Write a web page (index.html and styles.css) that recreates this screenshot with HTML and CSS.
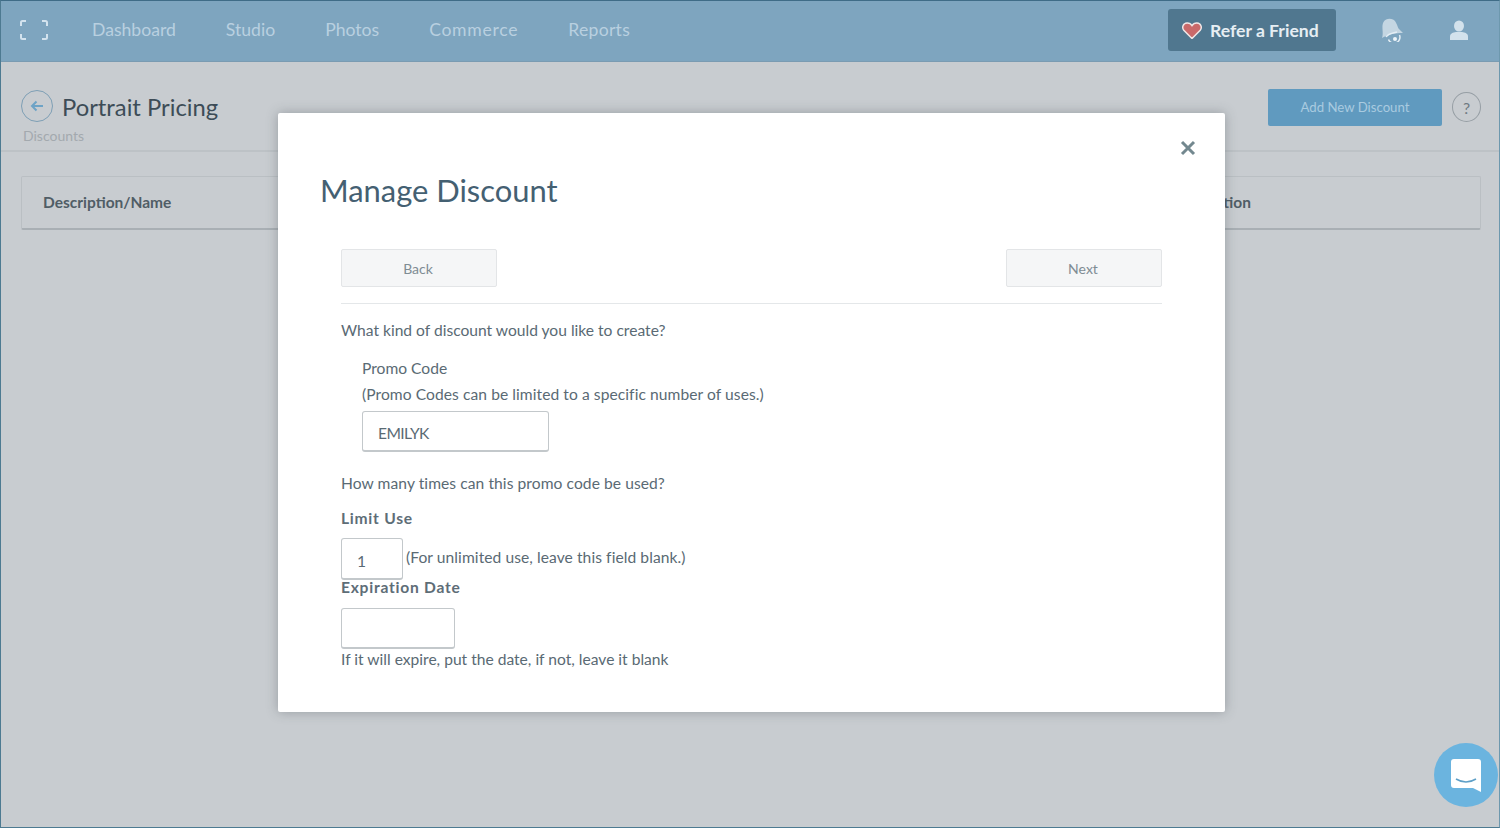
FILE: index.html
```html
<!DOCTYPE html>
<html lang="en">
<head>
<meta charset="utf-8">
<title>Manage Discount</title>
<link rel="stylesheet" href="styles.css">
</head>
<body>
<div class="page">
  <header class="nav">
    <svg class="logo" width="28" height="20" viewBox="0 0 28 20" fill="none" stroke="#d3e3ee" stroke-width="2"><path d="M6 1H2.500Q1 1 1 2.500V6M1 14V17.500Q1 19 2.500 19H6M22 1H25.500Q27 1 27 2.500V6M27 14V17.500Q27 19 25.500 19H22"/></svg>
    <nav class="links">
      <a>Dashboard</a><a>Studio</a><a>Photos</a><a class="wide">Commerce</a><a class="wide-sm">Reports</a>
    </nav>
    <div class="refer">
      <svg width="20" height="17" viewBox="0 0 20 17"><path d="M10 16.500 1.800 8.300C-.4 5.600 1 1.200 5 1c2.200-.1 4 1 5 2.600C11 2 12.800.9 15 1c4 .2 5.400 4.600 3.200 7.300Z" fill="#c9696a" stroke="#f0e6e6" stroke-width="1.500"/></svg>
      <span>Refer a Friend</span>
    </div>
    <svg class="bell" width="24" height="24" viewBox="0 0 24 24"><path d="M2 20C4 15 1 8 3.500 4 5.500.5 10 0 13 1.500c3.500 2 4 6 5.500 9L23 15c-7 0-15 1-21 5Z" fill="#c4d6e2"/><path d="M6 19c2-3.500 7-4 11-5M8.500 21.500a5 5 0 0 0 11-4.500" fill="none" stroke="#e4eef5" stroke-width="1.500"/><circle cx="15" cy="21" r="2" fill="#eef5f9"/></svg>
    <svg class="user" width="18" height="21" viewBox="0 0 18 21" fill="#d3e2ec"><ellipse cx="9" cy="6" rx="5" ry="5.500"/><path d="M0 20v-3.500c0-3 3-4 6-4.500h6c3 .5 6 1.500 6 4.500V20Z"/></svg>
  </header>
  <main class="content">
    <div class="head">
      <div class="title-block">
        <div class="title-row">
          <span class="back-circle">
            <svg width="14" height="12" viewBox="0 0 14 12" fill="none" stroke="#6da3c6" stroke-width="2"><path d="M13 6H2M6.500 1.500 2 6l4.500 4.500"/></svg>
          </span>
          <h1>Portrait Pricing</h1>
        </div>
        <div class="crumb">Discounts</div>
      </div>
      <div class="add">Add New Discount</div>
      <div class="help">?</div>
    </div>
    <div class="table-head">
      <span class="th">Description/Name</span>
      <span class="th">Expiration</span>
    </div>
  </main>

  <section class="modal">
    <div class="close">
      <svg width="16" height="16" viewBox="0 0 16 16" fill="none" stroke="#73888f" stroke-width="3"><path d="M2 2 14 14M14 2 2 14"/></svg>
    </div>
    <h2>Manage Discount</h2>
    <div class="body">
      <div class="steps">
        <div class="step">Back</div>
        <div class="step">Next</div>
      </div>
      <p class="q1">What kind of discount would you like to create?</p>
      <div class="promo">
        <div class="promo-name">Promo Code</div>
        <div class="promo-note">(Promo Codes can be limited to a specific number of uses.)</div>
        <div class="field code">EMILYK</div>
      </div>
      <p class="q2">How many times can this promo code be used?</p>
      <div class="label limit-label">Limit Use</div>
      <div class="limit-row">
        <div class="field limit">1</div>
        <span class="limit-note">(For unlimited use, leave this field blank.)</span>
      </div>
      <div class="label">Expiration Date</div>
      <div class="field date"></div>
      <p class="hint">If it will expire, put the date, if not, leave it blank</p>
    </div>
  </section>

  <div class="chat">
    <svg width="32" height="33" viewBox="0 0 32 33"><path d="M4 0H28Q31 0 31 3V33L23 29H4Q1 29 1 26V3Q1 0 4 0Z" fill="#fff"/><path d="M6 20Q16 26 26 20" fill="none" stroke="#5d9fc7" stroke-width="1.500"/></svg>
  </div>
</div>
</body>
</html>
```
FILE: styles.css
```css
* { box-sizing: border-box; }
html, body { margin: 0; padding: 0; }
body {
  font-family: Lato, "Open Sans", sans-serif;
  color: #4c5f6a;
  background: #c8ccd0;
}
.page {
  position: relative;
  width: 1500px;
  height: 828px;
  overflow: hidden;
  background: #c8ccd0;
  border-top: 1px solid #3f6c87;
  border-left: 1px solid #4d7a91;
  border-bottom: 1px solid #4d7a91;
  border-right: 1px solid #6d98ae;
}
.nav {
  display: flex;
  align-items: center;
  height: 61px;
  background: #7ea5bf;
  border-bottom: 1px solid #7a9bb2;
  padding: 0 0 2px 19px;
}
.logo { margin-right: 44px; flex: none; }
.links { display: flex; gap: 50px; flex: 1; padding-bottom: 2px; }
.links a { font-size: 17.600px; color: #b9d0e0; }
.links .wide { letter-spacing: .7px; }
.links .wide-sm { letter-spacing: .3px; }
.refer {
  display: flex;
  align-items: center;
  gap: 8px;
  width: 168px;
  height: 42px;
  padding-left: 14px;
  margin-right: 44px;
  background: #50778f;
  border-radius: 3px;
  color: #e6eef3;
  font-size: 17.600px;
  font-weight: 700;
}
.bell { margin-right: 46px; }
.user { margin-right: 31px; }
.content { padding: 0 18px 0 20px; }
.head {
  display: flex;
  align-items: flex-start;
  height: 90px;
  margin: 0 -18px 0 -20px;
  padding: 0 18px 0 20px;
  border-bottom: 2px solid #bdc2c6;
}
.title-block { flex: 1; padding-top: 28px; }
.title-row { display: flex; align-items: center; gap: 9px; }
.back-circle {
  display: flex;
  align-items: center;
  justify-content: center;
  width: 32px;
  height: 32px;
  border: 1.500px solid #7e9fb5;
  border-radius: 50%;
}
h1 { margin: 0; padding-top: 2px; font-size: 23.800px; font-weight: 400; line-height: 30px; color: #3d4c57; }
.crumb { margin: 6px 0 0 2px; font-size: 14px; line-height: 16px; color: #a3a9ae; }
.add {
  display: flex;
  align-items: center;
  justify-content: center;
  width: 174px;
  height: 37px;
  margin-top: 27px;
  padding-bottom: 2px;
  background: #609abf;
  border-radius: 2px;
  font-size: 13.200px;
  color: #a9cbe0;
}
.help {
  display: flex;
  align-items: center;
  justify-content: center;
  width: 29px;
  height: 30px;
  margin: 30px 0 0 10px;
  border: 1px solid #969ea4;
  border-radius: 50%;
  font-size: 16px;
  color: #6f7a82;
}
.table-head {
  display: flex;
  align-items: center;
  justify-content: space-between;
  height: 54px;
  margin-top: 24px;
  padding: 0 229px 2px 21px;
  border: 1px solid #babfc3;
  border-bottom: 2px solid #a9afb4;
  border-radius: 2px;
}
.th { font-size: 15.500px; font-weight: 700; color: #505d66; }
.modal {
  position: absolute;
  left: 277px;
  top: 112px;
  width: 947px;
  height: 599px;
  background: #fff;
  border-radius: 2px;
  box-shadow: 0 0 12px rgba(60, 70, 75, .35);
  padding: 59px 42px 0;
}
.close { position: absolute; right: 29px; top: 27px; width: 16px; height: 16px; display: flex; }
h2 {
  margin: 0;
  font-size: 30.900px;
  font-weight: 400;
  line-height: 38px;
  color: #446072;
}
.body {
  margin: 39px 21px 0;
  width: 821px;
  font-size: 15.600px;
  line-height: 20px;
  color: #5a6a74;
}
.steps {
  display: flex;
  justify-content: space-between;
  padding-bottom: 16px;
  border-bottom: 1px solid #e4e7e9;
}
.step {
  display: flex;
  align-items: center;
  justify-content: center;
  width: 156px;
  height: 38px;
  padding: 2px 2px 0 0;
  background: #f5f6f7;
  border: 1px solid #e3e5e7;
  border-radius: 2px;
  font-size: 14px;
  color: #7f8c94;
}
p { margin: 0; }
.q1 { margin-top: 16px; }
.promo { padding-left: 21px; margin-top: 18px; }
.promo-note { margin-top: 6px; letter-spacing: .07px; }
.field {
  background: #fff;
  border: 1px solid #c3c8cb;
  border-bottom-width: 2px;
  border-radius: 3px;
  color: #5a6a74;
}
.code {
  width: 187px;
  height: 41px;
  margin-top: 7px;
  padding: 11px 0 0 15px;
  letter-spacing: -.6px;
}
.q2 { margin-top: 21px; letter-spacing: .07px; }
.label { font-weight: 700; letter-spacing: .75px; color: #5e6d77; }
.limit-label { margin-top: 15px; }
.limit-row { display: flex; align-items: center; gap: 3px; margin: 10px 0 -3px; }
.limit { width: 62px; height: 42px; padding: 12px 0 0 15px; }
.limit-note { position: relative; top: -2px; letter-spacing: .07px; }
.date { width: 114px; height: 41px; margin-top: 11px; }
.hint { margin-top: 0; }
.chat {
  position: absolute;
  right: 1px;
  bottom: 20px;
  display: flex;
  align-items: center;
  justify-content: center;
  width: 64px;
  height: 64px;
  background: #6bb4df;
  border-radius: 50%;
}
```
